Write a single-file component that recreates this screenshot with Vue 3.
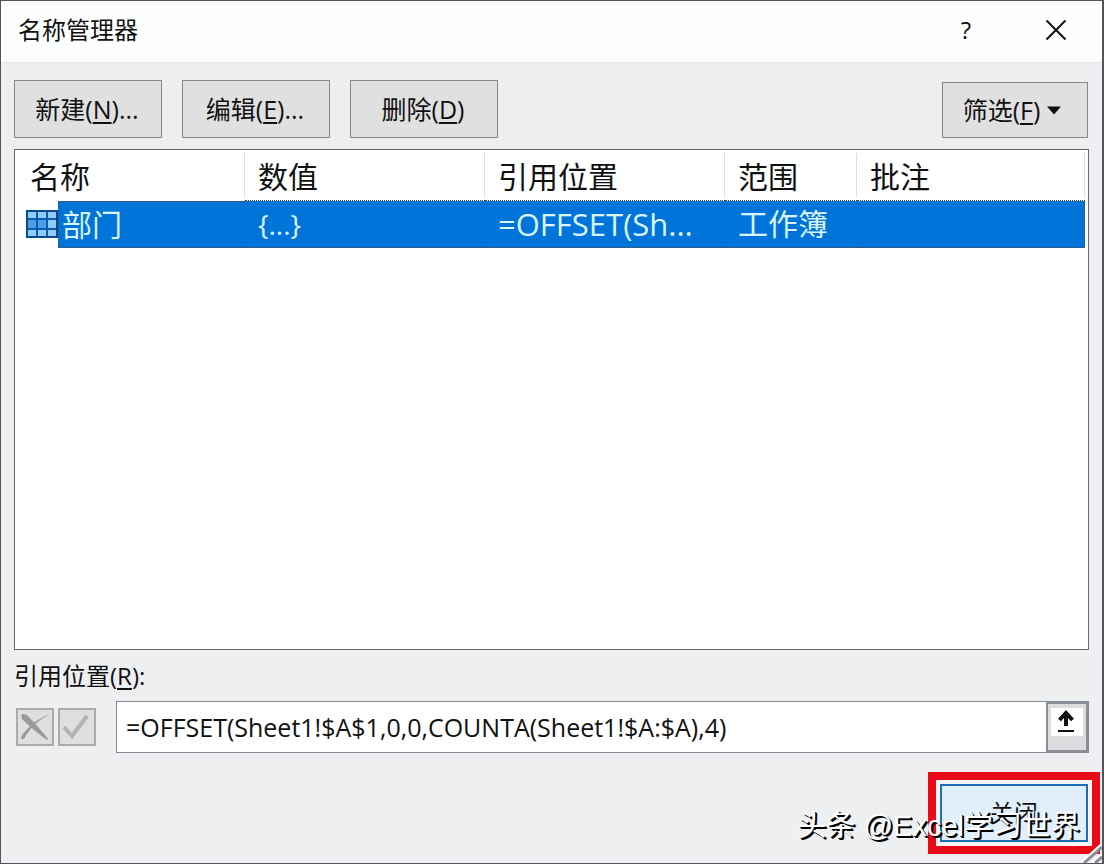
<script setup>
import { ref } from 'vue'

const formula = ref('=OFFSET(Sheet1!$A$1,0,0,COUNTA(Sheet1!$A:$A),4)')
const actions = [
  { label: '新建', key: 'N', more: '...' },
  { label: '编辑', key: 'E', more: '...' },
  { label: '删除', key: 'D', more: '' },
]
const columns = ['名称', '数值', '引用位置', '范围', '批注']
const rows = [{ name: '部门', value: '{...}', refersTo: '=OFFSET(Sh...', scope: '工作簿', note: '' }]
</script>

<template>
  <main class="dialog">
    <header class="titlebar">
      <h1 class="title">名称管理器</h1>
      <button class="caption-btn help" type="button" aria-label="帮助">?</button>
      <button class="caption-btn" type="button" aria-label="关闭窗口">
        <svg width="22" height="22" viewBox="0 0 22 22" fill="none" stroke="#111" stroke-width="2">
          <path d="M1.5 1.5 20.5 20.5M20.5 1.5 1.5 20.5" />
        </svg>
      </button>
    </header>

    <div class="body">
      <div class="toolbar">
        <button v-for="a in actions" :key="a.key" class="btn" type="button">
          <span>{{ a.label }}(<u>{{ a.key }}</u>){{ a.more }}</span>
        </button>
        <button class="btn filter" type="button">
          <span>筛选(<u>F</u>)</span>
          <svg width="14" height="9" viewBox="0 0 14 9"><path d="M0 .5h14L7 8.5z" fill="#111" /></svg>
        </button>
      </div>

      <div class="list">
        <table class="names">
          <colgroup>
            <col class="c-name" /><col class="c-value" /><col class="c-ref" /><col class="c-scope" /><col />
          </colgroup>
          <thead>
            <tr><th v-for="c in columns" :key="c" scope="col"><div>{{ c }}</div></th></tr>
          </thead>
          <tbody>
            <tr v-for="r in rows" :key="r.name">
              <td class="first">
                <div class="name-cell">
                  <svg width="32" height="28" viewBox="0 0 32 28">
                    <rect width="32" height="28" fill="#0b5cab" />
                    <rect x="1" y="1" width="30" height="26" fill="none" stroke="#0c4a8c" stroke-width="2" />
                    <g fill="#8ccbfa">
                      <rect x="2" y="2" width="8" height="6" /><rect x="12" y="2" width="8" height="6" /><rect x="22" y="2" width="8" height="6" />
                      <rect x="22" y="10" width="8" height="8" />
                      <rect x="2" y="20" width="8" height="6" /><rect x="12" y="20" width="8" height="6" /><rect x="22" y="20" width="8" height="6" />
                    </g>
                    <g fill="#4a9fe8">
                      <rect x="2" y="10" width="8" height="8" /><rect x="12" y="10" width="8" height="8" />
                    </g>
                  </svg>
                  <span class="name">{{ r.name }}</span>
                </div>
              </td>
              <td class="value">{{ r.value }}</td>
              <td class="refers">{{ r.refersTo }}</td>
              <td>{{ r.scope }}</td>
              <td class="last">{{ r.note }}</td>
            </tr>
          </tbody>
        </table>
      </div>

      <label class="ref-label" for="refers-to">引用位置(<u>R</u>):</label>
      <div class="ref-row">
        <div class="edit-btns">
          <button class="mini" type="button" disabled aria-label="取消">
            <svg width="34" height="34" viewBox="0 0 34 34">
              <path d="M3 5C5 3 8 4 10 6C17 13 24 21 30 29L29 30C22 25 12 17 4 9Z" fill="#999" />
              <path d="M31 5C21 9 11 19 6 29L3 29C3 27 4 25 5 24C12 15 21 8 30 5Z" fill="#999" />
            </svg>
          </button>
          <button class="mini" type="button" disabled aria-label="输入">
            <svg width="34" height="34" viewBox="0 0 34 34" fill="none" stroke="#b2b2b2" stroke-width="4">
              <path d="M4 17 12 26 27 6" />
            </svg>
          </button>
        </div>
        <div class="field">
          <input id="refers-to" v-model="formula" type="text" spellcheck="false" />
          <button class="collapse" type="button" aria-label="折叠对话框">
            <svg width="32" height="28" viewBox="0 0 32 28">
              <rect width="32" height="28" fill="#fff" />
              <path d="M15 18V5M8.500 12l6.500-7 6.500 7" fill="none" stroke="#111" stroke-width="4" />
              <path d="M7 23h16" stroke="#111" stroke-width="2" />
            </svg>
          </button>
        </div>
      </div>

      <footer class="footer">
        <button class="close" type="button">关闭</button>
      </footer>
    </div>

    <svg class="grip" width="24" height="20" viewBox="0 0 24 20" fill="none">
      <path d="M3 20 23 2M14 20 24 11" stroke="#fff" stroke-width="3" />
      <path d="M6 20 24 4M17 20 24 14" stroke="#8f8f93" stroke-width="3" />
    </svg>
    <div class="watermark">头条 @Excel学习世界</div>
  </main>
</template>

<style>
body {
  margin: 0;
}
</style>

<style scoped>
.dialog {
  position: relative;
  box-sizing: border-box;
  min-height: 100vh;
  display: flex;
  flex-direction: column;
  border: 1px solid #55525c;
  border-right-width: 2px;
  background: #eeeff1;
  color: #111;
  font-family: "Open Sans", "Noto Sans CJK SC", sans-serif;
  font-size: 24px;
  line-height: 32px;
}
button,
input {
  font: inherit;
  color: inherit;
  box-sizing: border-box;
}
u {
  text-decoration-thickness: 2px;
  text-underline-offset: 3px;
}
.titlebar {
  display: flex;
  align-items: center;
  box-sizing: border-box;
  height: 62px;
  padding: 0 18px 3px 17px;
  background: #fdfefe;
  border-bottom: 1px solid #e2e6e8;
}
.title {
  flex: 1;
  margin: 0;
  font-size: 24px;
  font-weight: 400;
}
.caption-btn {
  display: flex;
  align-items: center;
  justify-content: center;
  width: 56px;
  height: 40px;
  padding: 0;
  border: 0;
  background: none;
}
.help {
  margin-right: 34px;
}
.body {
  flex: 1;
  display: flex;
  flex-direction: column;
  padding: 17px 13px 21px;
}
.toolbar {
  display: flex;
  align-items: flex-end;
  gap: 20px;
  padding-right: 1px;
  margin-bottom: 11px;
}
.btn {
  display: flex;
  align-items: center;
  justify-content: center;
  gap: 7px;
  width: 148px;
  height: 58px;
  padding: 0 2px 0 0;
  border: 1px solid #85878b;
  background: #e0e0e1;
  font-size: 25px;
}
.filter {
  width: 146px;
  height: 56px;
  padding-right: 6px;
  margin-left: auto;
}
.list {
  flex: 1;
  border: 1px solid #686872;
  background: #fff;
  padding-right: 3px;
}
.names {
  width: 100%;
  border-collapse: collapse;
  table-layout: fixed;
  font-size: 30px;
  line-height: 40px;
}
.c-name {
  width: 230px;
}
.c-value,
.c-ref {
  width: 240px;
}
.c-scope {
  width: 132px;
}
th {
  height: 50px;
  padding: 0;
  font-weight: 400;
  text-align: left;
  vertical-align: middle;
}
th div {
  margin: 3px 0 2px;
  padding: 4px 0 1px 13px;
  border-right: 1px solid #dedfe2;
}
th:first-child div {
  padding-left: 15px;
}
td {
  height: 47px;
  box-sizing: border-box;
  padding: 0 0 0 13px;
  background: #0074d9;
  color: #d9f4ff;
  white-space: nowrap;
  border-top: 1px dotted #58483a;
  border-bottom: 1px dotted #58483a;
}
.value {
  font-size: 28px;
}
.refers {
  font-size: 31px;
}
.last {
  border-right: 1px dotted #58483a;
}
.first {
  padding: 0;
  border: 0;
  background: none;
}
.name-cell {
  display: flex;
  align-items: center;
  padding-left: 11px;
}
.name {
  flex: 1;
  box-sizing: border-box;
  height: 47px;
  padding-left: 3px;
  line-height: 46px;
  background: #0074d9;
  border: 1px dotted #58483a;
  border-right: 0;
}
.ref-label {
  margin: 10px 0 9px;
}
.ref-row {
  display: flex;
  align-items: center;
  gap: 20px;
}
.edit-btns {
  display: flex;
  gap: 4px;
  margin-left: 2px;
}
.mini {
  display: flex;
  align-items: center;
  justify-content: center;
  width: 38px;
  height: 38px;
  padding: 0;
  border: 2px solid #aaabaf;
  background: #dfdfe0;
}
.field {
  flex: 1;
  display: flex;
  height: 52px;
  box-sizing: border-box;
  border: 1px solid #858a94;
  background: #fff;
}
.field input {
  flex: 1;
  min-width: 0;
  padding: 0 9px;
  border: 0;
  outline: 0;
  background: none;
  font-size: 25px;
}
.collapse {
  display: flex;
  align-items: flex-start;
  justify-content: center;
  width: 42px;
  padding: 4px 0 0;
  border: 2px solid #8a8e96;
  background: #dcdcde;
}
.footer {
  display: flex;
  justify-content: flex-end;
  margin-top: 31px;
  padding-right: 1px;
}
.close {
  width: 148px;
  height: 58px;
  padding: 0;
  border: 2px solid #1b6fb8;
  background: #e0effb;
  box-shadow: 0 0 0 4px #f7f3f6;
  outline: 8px solid #e90b18;
  outline-offset: 4px;
}
.grip {
  position: absolute;
  right: 0;
  bottom: 0;
}
.watermark {
  position: absolute;
  right: 22px;
  bottom: 17px;
  font-family: "Liberation Sans", "Noto Sans CJK SC", sans-serif;
  font-size: 29px;
  line-height: 40px;
  color: #fff;
  text-shadow: 1px 1px 0 #000, 2px 2px 0 #000;
  pointer-events: none;
}
</style>
